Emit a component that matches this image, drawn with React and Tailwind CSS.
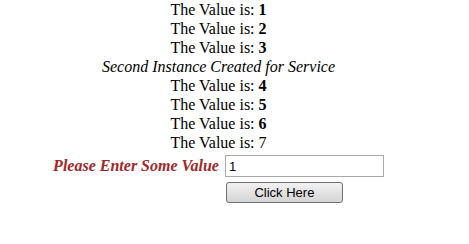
export default function App() {
  const vals = [
    { t: "1", b: true },
    { t: "2", b: true },
    { t: "3", b: true },
  ];
  const vals2 = [
    { t: "4", b: true },
    { t: "5", b: true },
    { t: "6", b: true },
    { t: "7", b: false },
  ];
  const Line = ({ v }) => (
    <div className="leading-[19px] text-[16px] text-black">
      The Value is: {v.b ? <b>{v.t}</b> : v.t}
    </div>
  );
  return (
    <div className="w-[469px] h-[244px] bg-white" style={{ fontFamily: '"Liberation Serif", "Times New Roman", serif' }}>
      <div className="w-[437px] flex flex-col items-center">
        {vals.map((v) => (
          <Line key={v.t} v={v} />
        ))}
        <div className="leading-[19px] text-[16px] italic text-black">Second Instance Created for Service</div>
        {vals2.map((v) => (
          <Line key={v.t} v={v} />
        ))}
        <div className="mt-[3px] grid grid-cols-[auto_auto] gap-x-[6px] gap-y-[5px] items-center">
          <div className="text-[16px] font-bold italic text-[#a0282a] text-right leading-[22px]">
            Please Enter Some Value
          </div>
          <input
            defaultValue="1"
            className="w-[159px] h-[22px] border border-[#a9a9a9] px-[3px] text-[13px] text-black outline-none"
            style={{ fontFamily: '"Liberation Sans", Arial, sans-serif' }}
          />
          <div />
          <button
            className="w-[117px] h-[21px] ml-[1px] rounded-[3px] border border-[#707070] bg-gradient-to-b from-[#f2f2f2] to-[#d4d4d4] text-[13px] text-black leading-none"
            style={{ fontFamily: '"Liberation Sans", Arial, sans-serif' }}
          >
            Click Here
          </button>
        </div>
      </div>
    </div>
  );
}
